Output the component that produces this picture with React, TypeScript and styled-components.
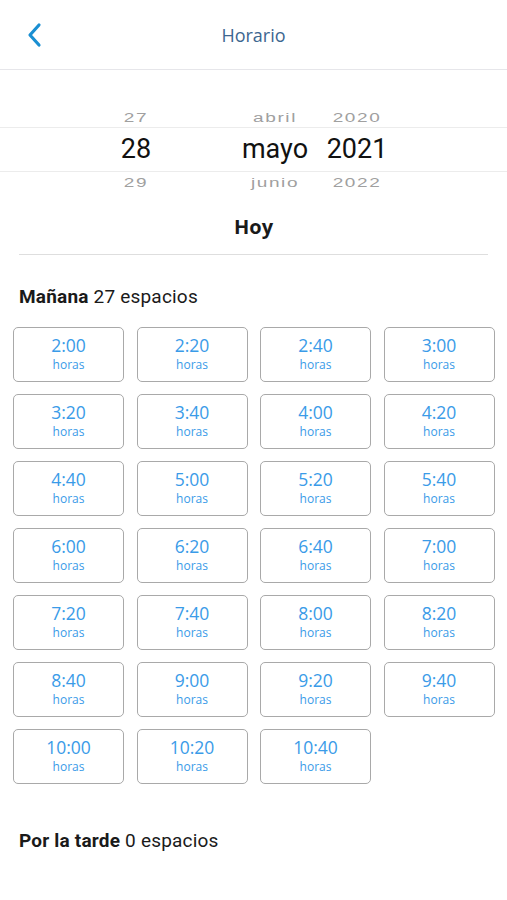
import React from 'react'
import styled, { createGlobalStyle } from 'styled-components'

const GlobalStyle = createGlobalStyle`
  body {
    margin: 0;
    background: #ffffff;
    font-family: Roboto, "Liberation Sans", sans-serif;
  }
`

const morning = [
  '2:00', '2:20', '2:40', '3:00',
  '3:20', '3:40', '4:00', '4:20',
  '4:40', '5:00', '5:20', '5:40',
  '6:00', '6:20', '6:40', '7:00',
  '7:20', '7:40', '8:00', '8:20',
  '8:40', '9:00', '9:20', '9:40',
  '10:00', '10:20', '10:40',
]

const BackIcon: React.FC = () => (
  <svg width="18" height="26" viewBox="0 0 18 26">
    <path d="M14 3 L5 13 L14 23" fill="none" stroke="#1a8fd2" strokeWidth="3.2" strokeLinecap="round" strokeLinejoin="round" />
  </svg>
)

export const App: React.FC = () => {
  return (
    <Page>
      <GlobalStyle />
      <Header>
        <BackButton><BackIcon /></BackButton>
        <Title>Horario</Title>
      </Header>
      <Picker>
        <PickerRow>
          <DayCell faded>27</DayCell>
          <MonthCell faded>abril</MonthCell>
          <YearCell faded>2020</YearCell>
        </PickerRow>
        <SelectedRow>
          <DayCell>28</DayCell>
          <MonthCell>mayo</MonthCell>
          <YearCell>2021</YearCell>
        </SelectedRow>
        <PickerRow>
          <DayCell faded>29</DayCell>
          <MonthCell faded>junio</MonthCell>
          <YearCell faded>2022</YearCell>
        </PickerRow>
      </Picker>
      <Today>Hoy</Today>
      <Section>
        <SectionTitle><b>Mañana</b> 27 espacios</SectionTitle>
        <SlotGrid>
          {morning.map((t) => (
            <Slot key={t}>
              <SlotTime>{t}</SlotTime>
              <SlotUnit>horas</SlotUnit>
            </Slot>
          ))}
        </SlotGrid>
      </Section>
      <Afternoon><b>Por la tarde</b> 0 espacios</Afternoon>
    </Page>
  )
}
export default App

const Page = styled.div`
  width: 507px;
  min-height: 900px;
  background: #ffffff;
`

const Header = styled.header`
  position: relative;
  height: 69px;
  display: flex;
  align-items: center;
  justify-content: center;
  border-bottom: 1px solid #e6e6ea;
`

const BackButton = styled.div`
  position: absolute;
  left: 25px;
  top: 22px;
  display: flex;
`

const Title = styled.h1`
  margin: 0;
  font-family: "Open Sans", sans-serif;
  font-weight: 400;
  font-size: 18px;
  color: #3d6690;
`

const Picker = styled.div`
  padding-top: 37px;
  display: flex;
  flex-direction: column;
`

const PickerRow = styled.div`
  display: flex;
  align-items: center;
  height: 20px;
`

const SelectedRow = styled(PickerRow)`
  height: 43px;
  border-top: 1px solid #ececec;
  border-bottom: 1px solid #ececec;
`

const Cell = styled.div<{ faded?: boolean }>`
  flex: none;
  font-family: ${(p) => (p.faded ? '"Liberation Sans", sans-serif' : 'Roboto, sans-serif')};
  font-size: ${(p) => (p.faded ? '19px' : '27px')};
  color: ${(p) => (p.faded ? '#a0a0a0' : '#111111')};
  letter-spacing: ${(p) => (p.faded ? '1.6px' : '0')};
  transform: ${(p) => (p.faded ? 'scaleY(0.68)' : 'none')};
  text-align: center;
  line-height: 1;
`

const DayCell = styled(Cell)`
  width: 60px;
  margin-left: 106px;
`

const MonthCell = styled(Cell)`
  width: 100px;
  margin-left: 59px;
`

const YearCell = styled(Cell)`
  width: 70px;
  margin-left: -3px;
`

const Today = styled.div`
  margin: 21px 19px 0;
  padding-bottom: 14px;
  text-align: center;
  font-family: "Open Sans", sans-serif;
  font-weight: 700;
  font-size: 20px;
  color: #1a1a1a;
  border-bottom: 1px solid #dedede;
`

const Section = styled.section`
  padding: 30px 13px 0;
`

const SectionTitle = styled.div`
  padding-left: 6px;
  font-family: Roboto, sans-serif;
  font-size: 19px;
  letter-spacing: 0.2px;
  color: #1a1a1a;
  margin-bottom: 19px;
  b {
    font-weight: 700;
  }
`

const SlotGrid = styled.div`
  display: grid;
  grid-template-columns: repeat(4, 111px);
  column-gap: 12.5px;
  row-gap: 12px;
`

const Slot = styled.div`
  box-sizing: border-box;
  height: 55px;
  border: 1.5px solid #a9a9a9;
  border-radius: 5px;
  display: flex;
  flex-direction: column;
  align-items: center;
  justify-content: center;
  gap: 3px;
`

const SlotTime = styled.span`
  font-family: "Open Sans", sans-serif;
  font-size: 17.5px;
  color: #3a9be8;
  line-height: 1.1;
`

const SlotUnit = styled.span`
  font-family: "Open Sans", sans-serif;
  font-size: 12px;
  color: #3a9be8;
  line-height: 1.2;
`

const Afternoon = styled.div`
  margin-top: 45px;
  padding-left: 19px;
  font-family: Roboto, sans-serif;
  font-size: 19px;
  letter-spacing: 0.2px;
  color: #1a1a1a;
  b {
    font-weight: 700;
  }
`
